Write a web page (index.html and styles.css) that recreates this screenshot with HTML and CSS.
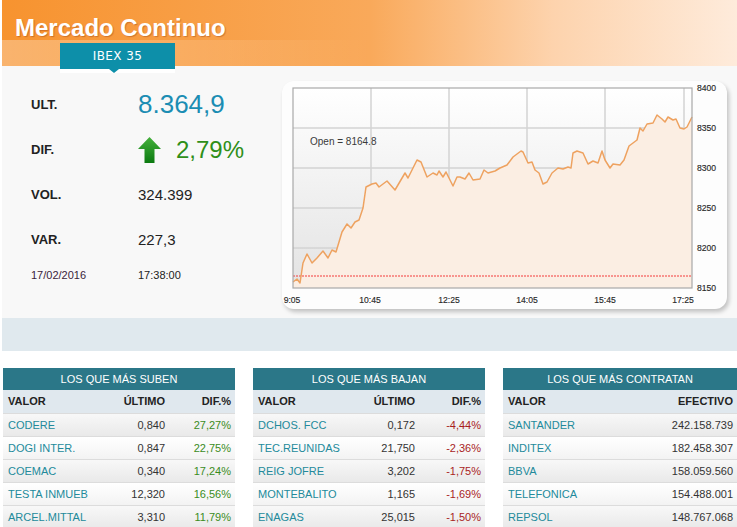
FILE: index.html
```html
<!DOCTYPE html>
<html lang="es">
<head>
    <meta charset="UTF-8">
    <meta name="viewport" content="width=device-width, initial-scale=1.0">
    <title>Mercado Continuo</title>
    <link rel="stylesheet" href="styles.css">
</head>
<body>
    <div class="page">
        <div class="masthead">
            <div class="masthead-title">Mercado Continuo</div>
            <div class="masthead-tabs">
                <div class="tab">IBEX 35</div>
            </div>
        </div>

        <div class="quote">
            <div class="summary">
                <div class="label">ULT.</div>
                <div class="value big last">8.364,9</div>
                <div class="label">DIF.</div>
                <div class="value big change">
                    <svg class="arrow" width="23" height="26" viewBox="0 0 23 26">
                        <defs>
                            <linearGradient id="arrowFill" x1="0" y1="0" x2="0" y2="1">
                                <stop offset="0" stop-color="#45b03c"/>
                                <stop offset="1" stop-color="#0b7a10"/>
                            </linearGradient>
                        </defs>
                        <path d="M11.5 0 L23 12 L16.5 12 L16.5 26 L6.5 26 L6.5 12 L0 12 Z" fill="url(#arrowFill)"/>
                    </svg>
                    <span>2,79%</span>
                </div>
                <div class="label">VOL.</div>
                <div class="value">324.399</div>
                <div class="label">VAR.</div>
                <div class="value">227,3</div>
                <div class="stamp date">17/02/2016</div>
                <div class="stamp">17:38:00</div>
            </div>

            <div class="chart-card">
                <svg width="445" height="228" viewBox="282 81 445 228">
                    <defs>
                        <linearGradient id="plotBg" x1="0" y1="0" x2="0" y2="1">
                            <stop offset="0" stop-color="#ffffff"/>
                            <stop offset="1" stop-color="#e3e3e3"/>
                        </linearGradient>
                    </defs>
                    <rect x="293" y="88" width="399" height="200" fill="url(#plotBg)"/>
                    <g stroke="#d3d3d3" stroke-width="1.5">
                        <line x1="293" y1="128" x2="692" y2="128"/>
                        <line x1="293" y1="168" x2="692" y2="168"/>
                        <line x1="293" y1="208" x2="692" y2="208"/>
                        <line x1="293" y1="248" x2="692" y2="248"/>
                        <line x1="371" y1="88" x2="371" y2="288"/>
                        <line x1="449" y1="88" x2="449" y2="288"/>
                        <line x1="527" y1="88" x2="527" y2="288"/>
                        <line x1="605" y1="88" x2="605" y2="288"/>
                        <line x1="684" y1="88" x2="684" y2="288"/>
                    </g>
                    <path fill="#fbeee3" d="M293,282 L297,279 300,283 303,263 307,254 312,263 317,258 323,251 328,258 332,250 336,252 342,232 347,224 351,228 355,222 359,220 363,208 366,187 372,184 376,183 379,187 387,181 395,190 405,173 408,178 417,160 421,162 427,177 433,173 437,175 439,171 443,177 446,172 453,186 457,177 460,177 465,179 469,173 473,180 480,179 484,170 488,173 495,171 500,168 507,165 513,157 521,151 523,152 528,163 532,162 535,170 539,173 543,184 547,182 552,173 558,168 563,169 568,167 571,168 573,153 577,151 583,153 588,164 593,161 598,163 602,151 605,160 610,168 613,164 620,165 624,160 629,146 633,143 637,140 640,128 643,131 647,124 653,123 657,115 662,119 665,122 668,117 673,120 676,119 680,128 684,129 687,127 692,117 L692,288 L293,288 Z"/>
                    <line x1="293" y1="276" x2="692" y2="276" stroke="#f43a3a" stroke-width="1" stroke-dasharray="2 1"/>
                    <polyline fill="none" stroke="#eea260" stroke-width="1.5" stroke-linejoin="round" points="293,282 297,279 300,283 303,263 307,254 312,263 317,258 323,251 328,258 332,250 336,252 342,232 347,224 351,228 355,222 359,220 363,208 366,187 372,184 376,183 379,187 387,181 395,190 405,173 408,178 417,160 421,162 427,177 433,173 437,175 439,171 443,177 446,172 453,186 457,177 460,177 465,179 469,173 473,180 480,179 484,170 488,173 495,171 500,168 507,165 513,157 521,151 523,152 528,163 532,162 535,170 539,173 543,184 547,182 552,173 558,168 563,169 568,167 571,168 573,153 577,151 583,153 588,164 593,161 598,163 602,151 605,160 610,168 613,164 620,165 624,160 629,146 633,143 637,140 640,128 643,131 647,124 653,123 657,115 662,119 665,122 668,117 673,120 676,119 680,128 684,129 687,127 692,117"/>
                    <rect x="293" y="88" width="399" height="200" fill="none" stroke="#a9a9a9" stroke-width="1.2"/>
                    <text class="open-note" x="310" y="144.5">Open = 8164.8</text>
                    <g class="axis-y">
                        <text x="697" y="91">8400</text>
                        <text x="697" y="131">8350</text>
                        <text x="697" y="171">8300</text>
                        <text x="697" y="211">8250</text>
                        <text x="697" y="251">8200</text>
                        <text x="697" y="291">8150</text>
                    </g>
                    <g class="axis-x">
                        <text x="292" y="303">9:05</text>
                        <text x="370" y="303">10:45</text>
                        <text x="449" y="303">12:25</text>
                        <text x="527" y="303">14:05</text>
                        <text x="605" y="303">15:45</text>
                        <text x="683" y="303">17:25</text>
                    </g>
                </svg>
            </div>
        </div>

        <div class="strip"></div>

        <div class="boards">
            <table class="board">
                <tr><th class="board-title" colspan="3">LOS QUE MÁS SUBEN</th></tr>
                <tr class="cols"><td class="name">VALOR</td><td class="num">ÚLTIMO</td><td class="pct">DIF.%</td></tr>
                <tr class="row"><td class="name">CODERE</td><td class="num">0,840</td><td class="pct up">27,27%</td></tr>
                <tr class="row"><td class="name">DOGI INTER.</td><td class="num">0,847</td><td class="pct up">22,75%</td></tr>
                <tr class="row"><td class="name">COEMAC</td><td class="num">0,340</td><td class="pct up">17,24%</td></tr>
                <tr class="row"><td class="name">TESTA INMUEB</td><td class="num">12,320</td><td class="pct up">16,56%</td></tr>
                <tr class="row"><td class="name">ARCEL.MITTAL</td><td class="num">3,310</td><td class="pct up">11,79%</td></tr>
            </table>

            <table class="board">
                <tr><th class="board-title" colspan="3">LOS QUE MÁS BAJAN</th></tr>
                <tr class="cols"><td class="name">VALOR</td><td class="num">ÚLTIMO</td><td class="pct">DIF.%</td></tr>
                <tr class="row"><td class="name">DCHOS. FCC</td><td class="num">0,172</td><td class="pct down">-4,44%</td></tr>
                <tr class="row"><td class="name">TEC.REUNIDAS</td><td class="num">21,750</td><td class="pct down">-2,36%</td></tr>
                <tr class="row"><td class="name">REIG JOFRE</td><td class="num">3,202</td><td class="pct down">-1,75%</td></tr>
                <tr class="row"><td class="name">MONTEBALITO</td><td class="num">1,165</td><td class="pct down">-1,69%</td></tr>
                <tr class="row"><td class="name">ENAGAS</td><td class="num">25,015</td><td class="pct down">-1,50%</td></tr>
            </table>

            <table class="board wide">
                <tr><th class="board-title" colspan="2">LOS QUE MÁS CONTRATAN</th></tr>
                <tr class="cols"><td class="name">VALOR</td><td class="cash">EFECTIVO</td></tr>
                <tr class="row"><td class="name">SANTANDER</td><td class="cash">242.158.739</td></tr>
                <tr class="row"><td class="name">INDITEX</td><td class="cash">182.458.307</td></tr>
                <tr class="row"><td class="name">BBVA</td><td class="cash">158.059.560</td></tr>
                <tr class="row"><td class="name">TELEFONICA</td><td class="cash">154.488.001</td></tr>
                <tr class="row"><td class="name">REPSOL</td><td class="cash">148.767.068</td></tr>
            </table>
        </div>
    </div>
</body>
</html>
```

FILE: styles.css
```css
body {
    margin: 0;
    background-color: #fff;
    font-family: "Liberation Sans", Arial, sans-serif;
    color: #222;
}
.page {
    width: 735px;
    padding-left: 2px;
}
.masthead {
    height: 66px;
    background: linear-gradient(to right, #f7932f 0%, #f9a95a 50%, #fdd3ad 75%, #feebdb 100%);
}
.masthead-title {
    height: 40px;
    display: flex;
    align-items: flex-end;
    padding-left: 13px;
    box-sizing: border-box;
    color: #fff;
    font-size: 24px;
    font-weight: bold;
    line-height: 1;
    text-shadow: 1px 1px 1px rgba(150, 60, 20, 0.4);
}
.masthead-tabs {
    height: 26px;
    padding: 3px 0 0 58px;
    box-sizing: border-box;
    background: linear-gradient(to right, rgba(255, 255, 255, 0.3), rgba(255, 255, 255, 0) 50%);
}
.tab {
    position: relative;
    z-index: 2;
    width: 115px;
    height: 26px;
    line-height: 26px;
    background-color: #0d8fa9;
    border-bottom: 4px solid #fff;
    color: #fff;
    text-align: center;
    font-family: "DejaVu Sans", Verdana, sans-serif;
    font-size: 12px;
    letter-spacing: 0.4px;
}
.tab::after {
    content: "";
    position: absolute;
    top: 26px;
    left: 49px;
    border-left: 5px solid transparent;
    border-right: 5px solid transparent;
    border-top: 4px solid #0d8fa9;
}
.quote {
    display: flex;
    height: 252px;
    background-color: #f8f8f8;
}
.summary {
    width: 280px;
    padding: 16px 0 0 29px;
    box-sizing: border-box;
    display: grid;
    grid-template-columns: 107px auto;
    grid-template-rows: 45px 45px 45px 45px 25px;
    align-items: center;
}
.label {
    font-size: 13px;
    font-weight: bold;
    color: #222;
}
.value {
    font-size: 15px;
    color: #222;
}
.big {
    font-size: 26px;
}
.last {
    color: #1b8db3;
}
.change {
    display: flex;
    align-items: center;
    gap: 15px;
    color: #2f8f19;
    font-size: 24px;
}
.arrow {
    display: block;
}
.stamp {
    font-size: 11px;
    color: #222;
}
.date {
    color: #3a1d3a;
}
.chart-card {
    margin-top: 15px;
    width: 445px;
    height: 228px;
    border-radius: 12px;
    background-color: #fdfdfd;
    box-shadow: 2px 3px 4px rgba(0, 0, 0, 0.22);
    overflow: hidden;
}
.chart-card svg {
    display: block;
}
.open-note {
    font-family: "Liberation Sans", Arial, sans-serif;
    font-size: 10px;
    fill: #3a3a3a;
}
.axis-y text,
.axis-x text {
    font-family: "Liberation Sans", Arial, sans-serif;
    font-size: 8.6px;
    fill: #2a2a2a;
    stroke: #2a2a2a;
    stroke-width: 0.15px;
}
.axis-x text {
    text-anchor: middle;
}
.strip {
    height: 33px;
    background-color: #e0e9ee;
}
.boards {
    display: flex;
    gap: 18px;
    padding: 17px 0 0 1px;
}
.board {
    width: 232px;
    border-collapse: collapse;
    font-size: 11px;
}
.board.wide {
    width: 234px;
}
.board td {
    padding: 0;
}
.board-title {
    height: 22px;
    padding: 0;
    background-color: #2b7788;
    color: #fff;
    font-weight: normal;
    text-align: center;
}
.cols {
    height: 23px;
    background-color: #e0e8ee;
    font-weight: bold;
    color: #222;
}
.row {
    height: 23px;
    border-top: 1px solid #dcdcdc;
    background: linear-gradient(#f8f8f8, #e9e9e9);
}
.row:nth-child(even) {
    background: linear-gradient(#ffffff, #f3f3f3);
}
.name {
    padding-left: 5px !important;
    text-align: left;
}
.row .name {
    color: #228a9b;
}
.num {
    width: 62px;
    text-align: right;
    color: #333;
}
.pct {
    width: 66px;
    padding-right: 4px !important;
    text-align: right;
    color: #333;
}
.cash {
    text-align: right;
    padding-right: 4px !important;
    color: #333;
}
.cols .num,
.cols .pct,
.cols .cash {
    color: #222;
}
.up {
    color: #3a8c1c !important;
}
.down {
    color: #a81e1e !important;
}
```
